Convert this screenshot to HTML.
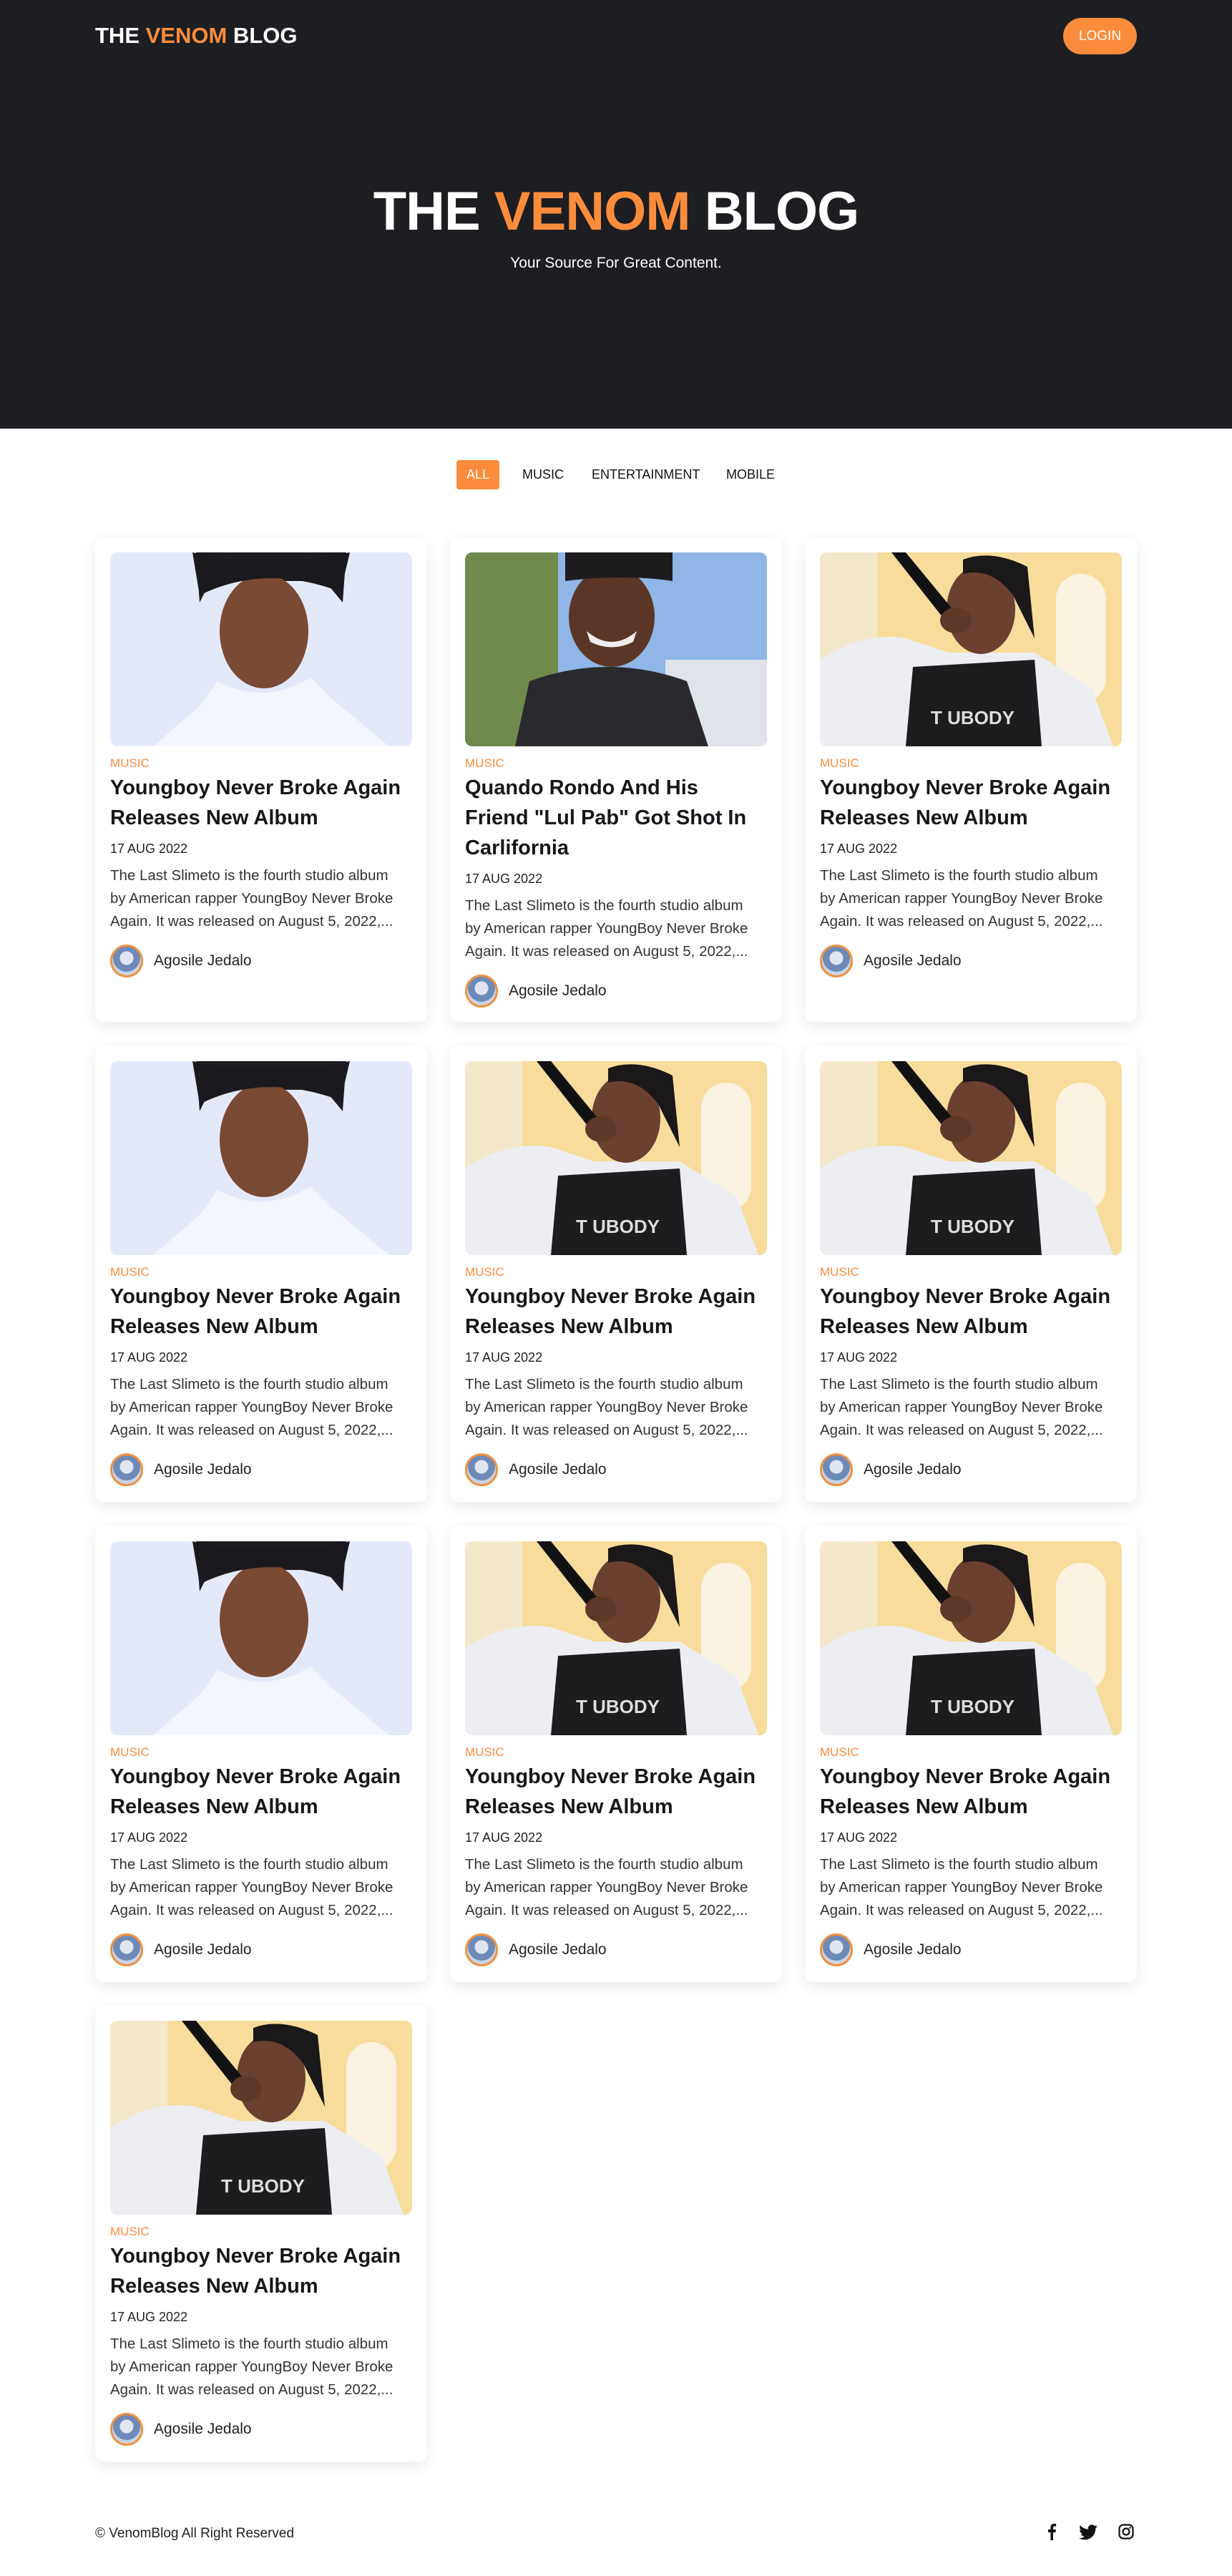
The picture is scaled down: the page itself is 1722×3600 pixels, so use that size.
<!DOCTYPE html>
<html><head><meta charset="utf-8">
<style>
*{margin:0;padding:0;box-sizing:border-box}
body{width:1722px;height:3600px;background:#fff;font-family:"Liberation Sans",sans-serif;position:relative;overflow:hidden;color:#111}
.hero{position:absolute;left:0;top:0;width:1722px;height:599px;background:#1c1e21}
.logo{position:absolute;left:133px;top:32px;font-size:31px;font-weight:bold;color:#fff;letter-spacing:0px}
.o{color:#fb8c3c}
.login{position:absolute;left:1486px;top:25px;width:103px;height:51px;border-radius:26px;background:#fb8c3c;color:#fff;font-size:19px;text-align:center;line-height:51px}
.title{position:absolute;left:0;width:1722px;top:252px;text-align:center;font-size:76px;font-weight:bold;color:#fff;letter-spacing:-1px}
.sub{position:absolute;left:0;width:1722px;top:356px;text-align:center;font-size:21px;color:#fff}
.filt{position:absolute;top:653px;font-size:18px;color:#111}
.all{position:absolute;left:638px;top:643px;width:60px;height:41px;background:#fb8c3c;color:#fff;border-radius:4px;text-align:center;line-height:41px;font-size:18px}
.card{position:absolute;width:464px;background:#fff;border-radius:12px;box-shadow:0 6px 22px rgba(0,0,0,0.09)}
.img{position:absolute;left:21px;top:21px;width:422px;height:271px;border-radius:10px;overflow:hidden}
.img svg{display:block}
.cat{position:absolute;left:21px;top:306px;font-size:17px;color:#fb8c3c}
.h{position:absolute;left:21px;top:329px;width:440px;font-size:29px;font-weight:bold;line-height:42px;color:#15181a;white-space:nowrap}
.date{position:absolute;left:21px;font-size:18px;color:#222}
.desc{position:absolute;left:21px;width:440px;font-size:20.5px;line-height:32px;color:#333;white-space:nowrap}
.au{position:absolute;left:21px;width:46px;height:46px;border-radius:50%;border:3px solid #f09040;background:radial-gradient(circle at 50% 40%,#dfe6f2 0 30%,#6d8ab8 31% 60%,#c9d4e6 61%)}
.an{position:absolute;left:82px;font-size:21px;color:#222}
.foot{position:absolute;left:133px;top:3530px;font-size:19px;color:#222}
</style></head><body>
<div class="hero">
<div class="logo">THE <span class="o">VENOM</span> BLOG</div>
<div class="login">LOGIN</div>
<div class="title">THE <span class="o">VENOM</span> BLOG</div>
<div class="sub">Your Source For Great Content.</div>
</div>
<div class="all">ALL</div>
<div class="filt" style="left:730px">MUSIC</div>
<div class="filt" style="left:827px">ENTERTAINMENT</div>
<div class="filt" style="left:1015px">MOBILE</div>

<svg width="0" height="0" style="position:absolute">
<defs>
<symbol id="A" viewBox="0 0 422 271">
<rect width="422" height="271" fill="#e4e9fa"/>
<path d="M120 0 L330 0 L325 70 L300 40 L140 40 L125 70 Z" fill="#1e1c22"/>
<ellipse cx="215" cy="110" rx="62" ry="80" fill="#7a4a34"/>
<path d="M115 0 Q215 25 335 0 L322 55 Q215 15 125 60 Z" fill="#1a1a1e"/>
<path d="M150 180 Q215 215 280 175 L310 205 L390 271 L60 271 L125 215 Z" fill="#f4f6fd"/>
</symbol>
<symbol id="B" viewBox="0 0 422 271">
<rect width="422" height="271" fill="#8fb6e6"/>
<rect x="0" y="0" width="130" height="271" fill="#6f8a4c"/>
<rect x="280" y="150" width="142" height="121" fill="#dfe4ea"/>
<path d="M70 271 L90 180 Q200 140 310 180 L340 271 Z" fill="#2a2a2e"/>
<ellipse cx="205" cy="90" rx="60" ry="70" fill="#5b3626"/>
<path d="M140 20 L140 0 L290 0 L290 40 Q220 30 140 40 Z" fill="#1d1d20"/>
<path d="M170 110 Q205 140 240 110 L235 125 Q205 140 175 125 Z" fill="#eee"/>
</symbol>
<symbol id="C" viewBox="0 0 422 271">
<rect width="422" height="271" fill="#f7dc9c"/>
<rect x="0" y="0" width="80" height="271" fill="#f4e8cc"/>
<rect x="330" y="30" width="70" height="180" rx="35" fill="#fbf3e2"/>
<path d="M0 150 Q60 110 120 120 L180 140 L300 140 L380 190 L410 271 L0 271 Z" fill="#eceef2"/>
<path d="M130 160 L300 150 L310 271 L120 271 Z" fill="#1d1d20"/>
<ellipse cx="225" cy="80" rx="48" ry="62" fill="#6b4030"/>
<path d="M200 10 Q240 -5 290 20 L300 120 L270 60 Q240 20 200 30 Z" fill="#1a1818"/>
<path d="M100 0 L120 0 L190 85 L175 95 Z" fill="#111"/>
<ellipse cx="190" cy="95" rx="22" ry="18" fill="#5e3828"/>
<text x="155" y="240" font-family="Liberation Sans" font-weight="bold" font-size="26" fill="#ddd">T    UBODY</text>
</symbol>
</defs></svg>

<!-- Row 1 -->
<div class="card" style="left:133px;top:751px;height:677px">
<div class="img"><svg width="422" height="271"><use href="#A"/></svg></div>
<div class="cat">MUSIC</div>
<div class="h">Youngboy Never Broke Again<br>Releases New Album</div>
<div class="date" style="top:425px">17 AUG 2022</div>
<div class="desc" style="top:457px">The Last Slimeto is the fourth studio album<br>by American rapper YoungBoy Never Broke<br>Again. It was released on August 5, 2022,...</div>
<div class="au" style="top:569px"></div><div class="an" style="top:580px">Agosile Jedalo</div>
</div>
<div class="card" style="left:629px;top:751px;height:677px">
<div class="img"><svg width="422" height="271"><use href="#B"/></svg></div>
<div class="cat">MUSIC</div>
<div class="h">Quando Rondo And His<br>Friend "Lul Pab" Got Shot In<br>Carlifornia</div>
<div class="date" style="top:467px">17 AUG 2022</div>
<div class="desc" style="top:499px">The Last Slimeto is the fourth studio album<br>by American rapper YoungBoy Never Broke<br>Again. It was released on August 5, 2022,...</div>
<div class="au" style="top:611px"></div><div class="an" style="top:622px">Agosile Jedalo</div>
</div>
<div class="card" style="left:1125px;top:751px;height:677px">
<div class="img"><svg width="422" height="271"><use href="#C"/></svg></div>
<div class="cat">MUSIC</div>
<div class="h">Youngboy Never Broke Again<br>Releases New Album</div>
<div class="date" style="top:425px">17 AUG 2022</div>
<div class="desc" style="top:457px">The Last Slimeto is the fourth studio album<br>by American rapper YoungBoy Never Broke<br>Again. It was released on August 5, 2022,...</div>
<div class="au" style="top:569px"></div><div class="an" style="top:580px">Agosile Jedalo</div>
</div>

<!-- Row 2 -->
<div class="card" style="left:133px;top:1462px;height:637px">
<div class="img"><svg width="422" height="271"><use href="#A"/></svg></div>
<div class="cat">MUSIC</div><div class="h">Youngboy Never Broke Again<br>Releases New Album</div>
<div class="date" style="top:425px">17 AUG 2022</div>
<div class="desc" style="top:457px">The Last Slimeto is the fourth studio album<br>by American rapper YoungBoy Never Broke<br>Again. It was released on August 5, 2022,...</div>
<div class="au" style="top:569px"></div><div class="an" style="top:580px">Agosile Jedalo</div>
</div>
<div class="card" style="left:629px;top:1462px;height:637px">
<div class="img"><svg width="422" height="271"><use href="#C"/></svg></div>
<div class="cat">MUSIC</div><div class="h">Youngboy Never Broke Again<br>Releases New Album</div>
<div class="date" style="top:425px">17 AUG 2022</div>
<div class="desc" style="top:457px">The Last Slimeto is the fourth studio album<br>by American rapper YoungBoy Never Broke<br>Again. It was released on August 5, 2022,...</div>
<div class="au" style="top:569px"></div><div class="an" style="top:580px">Agosile Jedalo</div>
</div>
<div class="card" style="left:1125px;top:1462px;height:637px">
<div class="img"><svg width="422" height="271"><use href="#C"/></svg></div>
<div class="cat">MUSIC</div><div class="h">Youngboy Never Broke Again<br>Releases New Album</div>
<div class="date" style="top:425px">17 AUG 2022</div>
<div class="desc" style="top:457px">The Last Slimeto is the fourth studio album<br>by American rapper YoungBoy Never Broke<br>Again. It was released on August 5, 2022,...</div>
<div class="au" style="top:569px"></div><div class="an" style="top:580px">Agosile Jedalo</div>
</div>

<!-- Row 3 -->
<div class="card" style="left:133px;top:2133px;height:637px">
<div class="img"><svg width="422" height="271"><use href="#A"/></svg></div>
<div class="cat">MUSIC</div><div class="h">Youngboy Never Broke Again<br>Releases New Album</div>
<div class="date" style="top:425px">17 AUG 2022</div>
<div class="desc" style="top:457px">The Last Slimeto is the fourth studio album<br>by American rapper YoungBoy Never Broke<br>Again. It was released on August 5, 2022,...</div>
<div class="au" style="top:569px"></div><div class="an" style="top:580px">Agosile Jedalo</div>
</div>
<div class="card" style="left:629px;top:2133px;height:637px">
<div class="img"><svg width="422" height="271"><use href="#C"/></svg></div>
<div class="cat">MUSIC</div><div class="h">Youngboy Never Broke Again<br>Releases New Album</div>
<div class="date" style="top:425px">17 AUG 2022</div>
<div class="desc" style="top:457px">The Last Slimeto is the fourth studio album<br>by American rapper YoungBoy Never Broke<br>Again. It was released on August 5, 2022,...</div>
<div class="au" style="top:569px"></div><div class="an" style="top:580px">Agosile Jedalo</div>
</div>
<div class="card" style="left:1125px;top:2133px;height:637px">
<div class="img"><svg width="422" height="271"><use href="#C"/></svg></div>
<div class="cat">MUSIC</div><div class="h">Youngboy Never Broke Again<br>Releases New Album</div>
<div class="date" style="top:425px">17 AUG 2022</div>
<div class="desc" style="top:457px">The Last Slimeto is the fourth studio album<br>by American rapper YoungBoy Never Broke<br>Again. It was released on August 5, 2022,...</div>
<div class="au" style="top:569px"></div><div class="an" style="top:580px">Agosile Jedalo</div>
</div>

<!-- Row 4 -->
<div class="card" style="left:133px;top:2803px;height:637px">
<div class="img"><svg width="422" height="271"><use href="#C"/></svg></div>
<div class="cat">MUSIC</div><div class="h">Youngboy Never Broke Again<br>Releases New Album</div>
<div class="date" style="top:425px">17 AUG 2022</div>
<div class="desc" style="top:457px">The Last Slimeto is the fourth studio album<br>by American rapper YoungBoy Never Broke<br>Again. It was released on August 5, 2022,...</div>
<div class="au" style="top:569px"></div><div class="an" style="top:580px">Agosile Jedalo</div>
</div>

<div class="foot">© VenomBlog All Right Reserved</div>
<svg style="position:absolute;left:1460px;top:3526px" width="20" height="24" viewBox="0 0 20 24"><path d="M12 24V13h3.5l.5-4h-4V6.5c0-1.1.4-1.9 2-1.9h2.1V1.1C15.7 1 14.5.9 13.2.9 10.3.9 8.4 2.6 8.4 5.8V9H5v4h3.4v11z" fill="#111"/></svg>
<svg style="position:absolute;left:1508px;top:3528px" width="26" height="22" viewBox="0 0 24 20"><path d="M24 2.4c-.9.4-1.8.6-2.8.8 1-.6 1.8-1.6 2.2-2.7-1 .6-2 1-3.1 1.2A4.9 4.9 0 0 0 11.9 6C7.8 5.8 4.2 3.9 1.7.9c-1.3 2.3-.6 5.1 1.5 6.6-.8 0-1.6-.2-2.2-.6 0 2.4 1.7 4.4 3.9 4.9-.7.2-1.5.2-2.2.1.6 2 2.4 3.4 4.6 3.4A9.9 9.9 0 0 1 0 17.3 14 14 0 0 0 7.5 19.5c9.1 0 14.3-7.7 14-14.7 1-.7 1.8-1.5 2.5-2.4z" fill="#111"/></svg>
<svg style="position:absolute;left:1563px;top:3527px" width="22" height="22" viewBox="0 0 22 22"><rect x="1.5" y="1.5" width="19" height="19" rx="5.5" fill="none" stroke="#111" stroke-width="2.2"/><circle cx="11" cy="11" r="4.5" fill="none" stroke="#111" stroke-width="2.2"/><circle cx="16.5" cy="5.5" r="1.3" fill="#111"/></svg>
</body></html>
